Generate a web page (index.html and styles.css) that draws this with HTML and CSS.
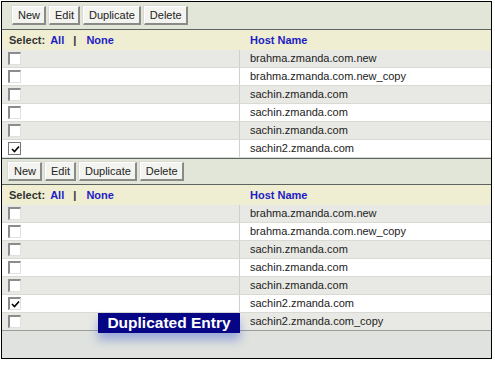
FILE: index.html
```html
<!DOCTYPE html>
<html>
<head>
<meta charset="utf-8">
<link rel="stylesheet" href="styles.css">
</head>
<body>
<div class="frame">
  <div class="toolbar">
    <span class="btn">New</span><span class="btn">Edit</span><span class="btn">Duplicate</span><span class="btn">Delete</span>
  </div>
  <div class="head">
    <div class="c1"><b class="lbl">Select:</b> <a class="lnk">All</a> <span class="bar">|</span> <a class="lnk">None</a></div>
    <div class="c2"><span class="lnk">Host Name</span></div>
  </div>
  <div class="row alt"><div class="c1"><span class="cb"></span></div><div class="c2">brahma.zmanda.com.new</div></div>
  <div class="row"><div class="c1"><span class="cb"></span></div><div class="c2">brahma.zmanda.com.new_copy</div></div>
  <div class="row alt"><div class="c1"><span class="cb"></span></div><div class="c2">sachin.zmanda.com</div></div>
  <div class="row"><div class="c1"><span class="cb"></span></div><div class="c2">sachin.zmanda.com</div></div>
  <div class="row alt"><div class="c1"><span class="cb"></span></div><div class="c2">sachin.zmanda.com</div></div>
  <div class="row"><div class="c1"><span class="cb on"><svg width="9" height="8" viewBox="0 0 9 8"><path d="M1 4 L3.5 6.5 L8 1.5" fill="none" stroke="#000" stroke-width="1.6"/></svg></span></div><div class="c2">sachin2.zmanda.com</div></div>

  <div class="toolbar t2">
    <span class="btn">New</span><span class="btn">Edit</span><span class="btn">Duplicate</span><span class="btn">Delete</span>
  </div>
  <div class="head">
    <div class="c1"><b class="lbl">Select:</b> <a class="lnk">All</a> <span class="bar">|</span> <a class="lnk">None</a></div>
    <div class="c2"><span class="lnk">Host Name</span></div>
  </div>
  <div class="row alt"><div class="c1"><span class="cb"></span></div><div class="c2">brahma.zmanda.com.new</div></div>
  <div class="row"><div class="c1"><span class="cb"></span></div><div class="c2">brahma.zmanda.com.new_copy</div></div>
  <div class="row alt"><div class="c1"><span class="cb"></span></div><div class="c2">sachin.zmanda.com</div></div>
  <div class="row"><div class="c1"><span class="cb"></span></div><div class="c2">sachin.zmanda.com</div></div>
  <div class="row alt"><div class="c1"><span class="cb"></span></div><div class="c2">sachin.zmanda.com</div></div>
  <div class="row"><div class="c1"><span class="cb"><svg width="9" height="8" viewBox="0 0 9 8"><path d="M1 4 L3.5 6.5 L8 1.5" fill="none" stroke="#000" stroke-width="1.6"/></svg></span></div><div class="c2">sachin2.zmanda.com</div></div>
  <div class="row alt last"><div class="c1"><span class="cb"></span><span class="tip">Duplicated Entry</span></div><div class="c2">sachin2.zmanda.com_copy</div></div>
  <div class="footer"></div>
</div>
</body>
</html>
```

FILE: styles.css
```css
* { box-sizing: border-box; }
html, body { margin: 0; padding: 0; background: #fff; }
body {
  font-family: "Liberation Sans", Arial, sans-serif;
  font-size: 11px;
  color: #222;
}
.frame {
  margin: 1px 0 0 1px;
  width: 491px;
  border: 1px solid #000;
}
.toolbar {
  height: 28px;
  background: #e2e6d9;
  border-bottom: 1px solid #5d6460;
  display: flex;
  align-items: center;
  gap: 3px;
  padding: 0 0 1px 10px;
}
.toolbar.t2 {
  height: 27px;
  border-top: 1px solid #5d6460;
  padding-left: 6px;
}
.btn {
  display: inline-block;
  height: 19px;
  line-height: 16px;
  padding: 0 4px 0 5px;
  font-size: 11px;
  color: #222;
  background: #f3f3ef;
  border-top: 1px solid #fff;
  border-left: 1px solid #fff;
  border-right: 2px solid #8a8a86;
  border-bottom: 2px solid #8a8a86;
  box-shadow: -1px -1px 0 #d8dad2;
}
.head {
  height: 20px;
  background: #efeed2;
  display: flex;
  align-items: center;
}
.head .c1 { width: 238px; padding-left: 7px; }
.head .c2 { padding-left: 10px; }
.lbl { color: #333; font-weight: bold; }
.lnk { color: #1d1dc4; font-weight: bold; text-decoration: none; }
.bar { color: #333; font-weight: bold; margin: 0 7px 0 6px; }
.head .c1 .lnk:first-of-type { margin-left: 2px; }
.row {
  height: 18px;
  display: flex;
  background: #fff;
  border-bottom: 1px solid #d9dad4;
}
.row.alt { background: #e8e9e4; }
.row .c1 {
  width: 238px;
  border-right: 1px solid #cfd0ca;
  padding: 2px 0 0 6px;
  position: relative;
}
.row .c2 {
  padding-left: 10px;
  line-height: 17px;
  color: #222;
}
.cb {
  display: block;
  width: 13px;
  height: 13px;
  background: #fff;
  border-top: 2px solid #8c8c8c;
  border-left: 2px solid #8c8c8c;
  border-right: 1px solid #e0e0e0;
  border-bottom: 1px solid #e0e0e0;
  position: relative;
}
.cb svg { position: absolute; left: 1px; top: 1px; }
.cb.on {
  border: 1px solid #777;
}
.cb.on svg { left: 2px; top: 2px; }
.tip {
  position: absolute;
  left: 96px;
  top: 0px;
  width: 142px;
  height: 20px;
  background: #050585;
  color: #fff;
  font-size: 15.5px;
  font-weight: bold;
  line-height: 20px;
  text-align: center;
  box-shadow: 0 7px 10px rgba(70, 100, 210, 0.45);
  z-index: 2;
}
.row.last { border-bottom: 1px solid #9a9c98; }
.footer {
  height: 27px;
  background: #dfe2de;
}
```
